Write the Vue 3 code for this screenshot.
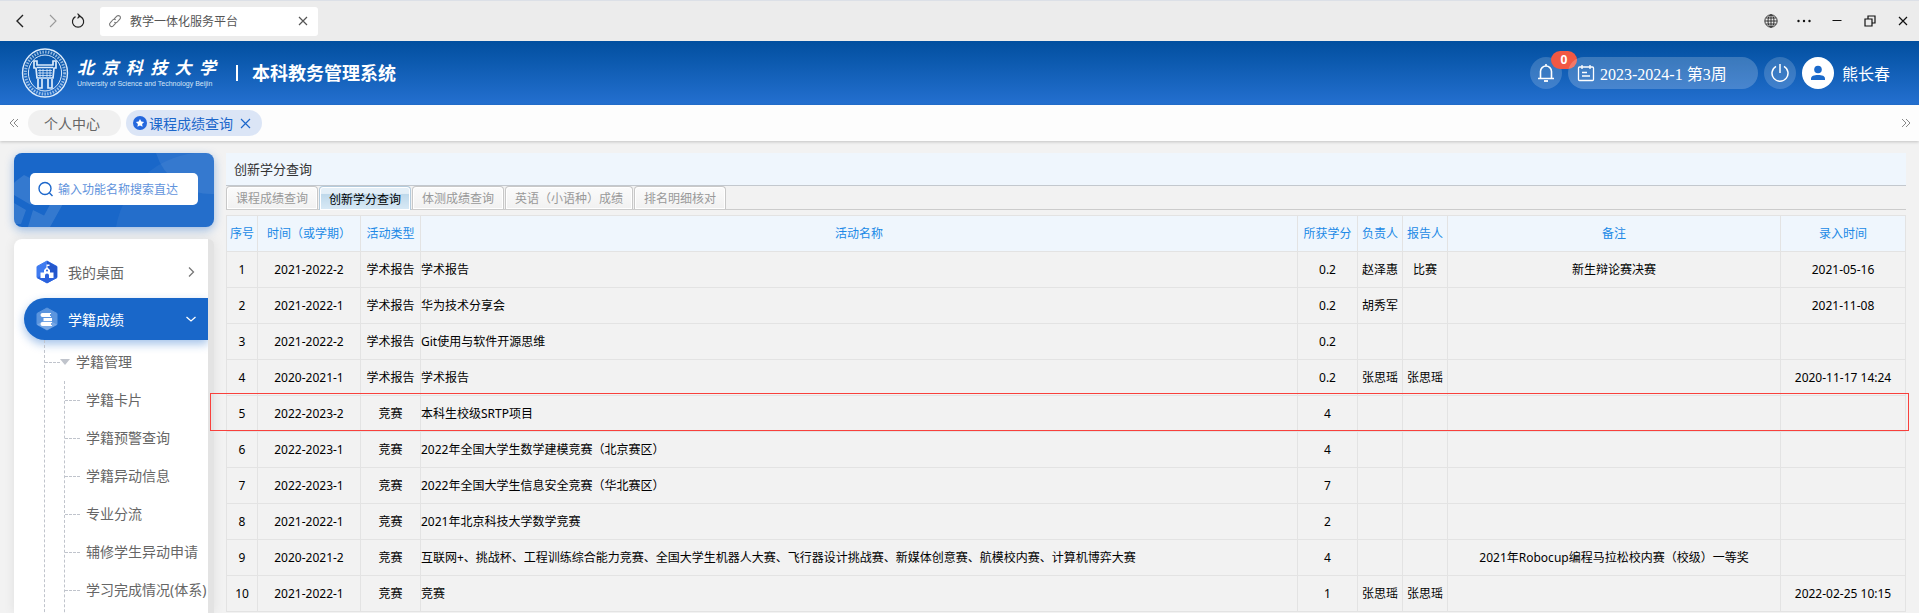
<script setup>
import { ref } from 'vue'

const keyword = ref('')
const activeTab = ref(1)
const logoChars = ['北', '京', '科', '技', '大', '学']
const tabs = ['课程成绩查询', '创新学分查询', '体测成绩查询', '英语（小语种）成绩', '排名明细核对']
const leaves = ['学籍卡片', '学籍预警查询', '学籍异动信息', '专业分流', '辅修学生异动申请', '学习完成情况(体系)']
const columns = ['序号', '时间（或学期）', '活动类型', '活动名称', '所获学分', '负责人', '报告人', '备注', '录入时间']
const rows = [
  [1, '2021-2022-2', '学术报告', '学术报告', '0.2', '赵泽惠', '比赛', '新生辩论赛决赛', '2021-05-16'],
  [2, '2021-2022-1', '学术报告', '华为技术分享会', '0.2', '胡秀军', '', '', '2021-11-08'],
  [3, '2021-2022-2', '学术报告', 'Git使用与软件开源思维', '0.2', '', '', '', ''],
  [4, '2020-2021-1', '学术报告', '学术报告', '0.2', '张思瑶', '张思瑶', '', '2020-11-17 14:24'],
  [5, '2022-2023-2', '竞赛', '本科生校级SRTP项目', '4', '', '', '', ''],
  [6, '2022-2023-1', '竞赛', '2022年全国大学生数学建模竞赛（北京赛区）', '4', '', '', '', ''],
  [7, '2022-2023-1', '竞赛', '2022年全国大学生信息安全竞赛（华北赛区）', '7', '', '', '', ''],
  [8, '2021-2022-1', '竞赛', '2021年北京科技大学数学竞赛', '2', '', '', '', ''],
  [9, '2020-2021-2', '竞赛', '互联网+、挑战杯、工程训练综合能力竞赛、全国大学生机器人大赛、飞行器设计挑战赛、新媒体创意赛、航模校内赛、计算机博弈大赛', '4', '', '', '2021年Robocup编程马拉松校内赛（校级）一等奖', ''],
  [10, '2021-2022-1', '竞赛', '竞赛', '1', '张思瑶', '张思瑶', '', '2022-02-25 10:15'],
]
</script>

<template>
  <div class="shell">
    <div class="chrome">
      <button class="nav back" aria-label="后退">
        <svg width="16" height="16" viewBox="0 0 16 16"><path d="M11 2 5 8l6 6" fill="none" stroke="#222" stroke-width="1.4" /></svg>
      </button>
      <button class="nav forward" aria-label="前进">
        <svg width="16" height="16" viewBox="0 0 16 16"><path d="m5 2 6 6-6 6" fill="none" stroke="#999" stroke-width="1.1" /></svg>
      </button>
      <button class="nav reload" aria-label="刷新">
        <svg width="16" height="16" viewBox="0 0 16 16"><path d="M5.500 3.600A5.600 5.600 0 1 0 10.600 3.600L8.200 3M7.500.6 10 3 7.500 5.400" fill="none" stroke="#222" stroke-width="1.2" /></svg>
      </button>
      <div class="page-tab">
        <svg width="14" height="14" viewBox="0 0 14 14" fill="none" stroke="#777" stroke-width="1.1"><path d="M6 5.2 8.8 2.2a2.1 2.1 0 0 1 3 3L9.300 8A2 2 0 0 1 6.300 8M8 8.800 5.200 11.800a2.100 2.100 0 0 1-3-3L4.700 6a2 2 0 0 1 3 0" /></svg>
        <span>教学一体化服务平台</span>
        <button aria-label="关闭页面">
          <svg width="10" height="10" viewBox="0 0 10 10"><path d="m1 1 8 8M9 1 1 9" stroke="#555" stroke-width="1.2" /></svg>
        </button>
      </div>
      <div class="window-tools">
        <button aria-label="语言">
          <svg width="14" height="14" viewBox="0 0 14 14" fill="none" stroke="#111" stroke-width=".8"><circle cx="7" cy="7" r="6.200" /><ellipse cx="7" cy="7" rx="3" ry="6.200" /><path d="M7 1v12M1 7h12M2 4h10M2 10h10" /></svg>
        </button>
        <button aria-label="更多">
          <svg width="14" height="14" viewBox="0 0 14 14" fill="#111"><circle cx="1.500" cy="7" r="1.200" /><circle cx="7" cy="7" r="1.200" /><circle cx="12.500" cy="7" r="1.200" /></svg>
        </button>
        <button aria-label="最小化">
          <svg width="12" height="14" viewBox="0 0 12 14"><path d="M1.500 6.500h9" stroke="#111" /></svg>
        </button>
        <button aria-label="还原">
          <svg width="12" height="12" viewBox="0 0 12 12" fill="none" stroke="#111" stroke-width="1.200"><path d="M1 4h7v7H1zM4 4V1h7v7H8" /></svg>
        </button>
        <button aria-label="关闭">
          <svg width="12" height="12" viewBox="0 0 12 12"><path d="m2 2 8 8M10 2l-8 8" stroke="#111" stroke-width="1.200" /></svg>
        </button>
      </div>
    </div>

    <header class="header">
      <svg class="emblem" width="48" height="50" viewBox="0 0 48 50" fill="none" stroke="#dcebfb">
        <ellipse cx="24" cy="25" rx="22.500" ry="24" stroke-width="1.400" />
        <ellipse cx="24" cy="25" rx="19.600" ry="21" stroke-width="3" stroke-dasharray="1.500 1.300" opacity=".65" />
        <ellipse cx="24" cy="25" rx="16.600" ry="18" stroke-width="1" />
        <path d="M13 13h3v4h16v-4h3v7h-2l-1 10H16l-1-10h-2z" stroke-width="1.700" />
        <path d="M17 31v9h4v-9M27 31v9h4v-9M16 19.500h16" stroke-width="1.700" />
        <path d="M17 22.500h14M17 25h14M17 27.500h14M19 21v8M22 21v8M26 21v8M29 21v8" stroke-width=".8" />
      </svg>
      <div class="school">
        <div class="school-cn"><span v-for="c in logoChars" :key="c">{{ c }}</span></div>
        <div class="school-en">University of Science and Technology Beijin</div>
      </div>
      <i class="divider"></i>
      <h1>本科教务管理系统</h1>
      <div class="user-tools">
        <button class="round bell" aria-label="消息">
          <svg width="18" height="20" viewBox="0 0 18 20" fill="none" stroke="#fff" stroke-width="1.600"><path d="M3.500 15V8.500a5.500 5.500 0 0 1 11 0V15M1 15.500h16M9 1v2" /><path d="M7 18h4" stroke-width="1.800" /></svg>
          <span class="badge">0</span>
        </button>
        <div class="week">
          <svg width="18" height="18" viewBox="0 0 18 18" fill="none" stroke="#fff" stroke-width="1.300"><rect x="1.500" y="3" width="15" height="13.500" rx="1" /><path d="M5 1v4M13 1v4M5 8.500h5M5 12h8" /></svg>
          <span>2023-2024-1 第3周</span>
        </div>
        <button class="round" aria-label="退出">
          <svg width="20" height="20" viewBox="0 0 20 20" fill="none" stroke="#fff" stroke-width="1.500"><path d="M6 3.300a8 8 0 1 0 8 0M10 1v9" /></svg>
        </button>
        <div class="avatar">
          <svg width="16" height="16" viewBox="0 0 16 16" fill="#1b6acb"><circle cx="8" cy="4.500" r="3.800" /><path d="M1 15v-1.500C1 11 4 10 8 10s7 1 7 3.500V15z" /></svg>
        </div>
        <span class="user-name">熊长春</span>
      </div>
    </header>

    <nav class="strip">
      <button class="chev" aria-label="向左">
        <svg width="10" height="10" viewBox="0 0 10 10"><path d="M5 1 1 5l4 4M9 1 5 5l4 4" fill="none" stroke="#888" /></svg>
      </button>
      <a class="pill" href="#">个人中心</a>
      <div class="pill current">
        <svg width="14" height="14" viewBox="0 0 14 14"><circle cx="7" cy="7" r="7" fill="#2467dd" /><path d="m7 3 1.300 2.600 2.800.4-2 2 .5 2.800L7 9.500l-2.600 1.300.5-2.800-2-2 2.800-.4z" fill="#fff" /></svg>
        <a href="#">课程成绩查询</a>
        <button aria-label="关闭标签">
          <svg width="11" height="11" viewBox="0 0 11 11"><path d="m1 1 9 9M10 1l-9 9" stroke="#1c67cb" stroke-width="1.200" /></svg>
        </button>
      </div>
      <button class="chev last" aria-label="向右">
        <svg width="10" height="10" viewBox="0 0 10 10"><path d="m1 1 4 4-4 4M5 1l4 4-4 4" fill="none" stroke="#888" /></svg>
      </button>
    </nav>

    <div class="body">
      <aside class="side">
        <div class="search-card">
          <svg class="deco" width="200" height="74" viewBox="0 0 200 74" fill="#fff">
            <path d="M142 0a58 58 0 0 0 58 41V0z" opacity=".08" /><path d="M102 74a90 90 0 0 1 98-74v74z" opacity=".05" />
            <path d="m2 28 8-6 16 8-9 22-17-10V30zM0 50l12 7-5 14H0zM19 57l14 7-5 10H14zM40 44l10 5-14 25H24z" opacity=".12" />
          </svg>
          <label class="search">
            <svg width="16" height="16" viewBox="0 0 16 16" fill="none" stroke="#1c67cb" stroke-width="1.400"><circle cx="7" cy="7.500" r="6" /><path d="m11.500 12 3 3" /></svg>
            <input v-model="keyword" type="text" aria-label="搜索功能" placeholder="输入功能名称搜索直达" />
          </label>
        </div>

        <div class="menu">
          <button class="menu-item">
            <svg width="22" height="24" viewBox="0 0 22 24"><path d="M11 1 21 6.500v11L11 23 1 17.500v-11z" fill="#3f7bf0" stroke="#3f7bf0" stroke-linejoin="round" /><path d="M11 1 21 6.500v11L11 23z" fill="#2457cc" /><path d="M11 12 1 18l10 5 10-5z" fill="#2c62dc" /><path d="M4.500 12.500H8V10l2.500-2.500V4.500h3V6h-2v1.500L14 10v2.500h3.500V18H13v-2.500a2 2 0 0 0-4 0V18H4.500z" fill="#fff" /><circle cx="11" cy="10.500" r="1" fill="#2c62dc" /></svg>
            <span>我的桌面</span>
            <svg class="arrow" width="12" height="12" viewBox="0 0 12 12"><path d="m4 1.500 4.500 4.500L4 10.500" fill="none" stroke="#777" stroke-width="1.300" /></svg>
          </button>
          <button class="menu-item open">
            <svg width="22" height="24" viewBox="0 0 22 24"><path d="M11 1 21 6.500v11L11 23 1 17.500v-11z" fill="#5b95de" stroke="#5b95de" stroke-linejoin="round" /><path d="M11 12 1 17.500 11 23l10-5.500z" fill="#76a7e5" /><path d="M6.500 6H15v1h-1v2h1v1H6.500a2 2 0 0 1 0-4zM7.500 11H16v3H7.500zM6.500 15H16v1h-1v2h1v1H6.500a2 2 0 0 1 0-4z" fill="#fff" /></svg>
            <span>学籍成绩</span>
            <svg class="arrow" width="12" height="12" viewBox="0 0 12 12"><path d="m1.500 4 4.500 4 4.500-4" fill="none" stroke="#fff" stroke-width="1.300" /></svg>
          </button>
          <div class="tree">
            <a class="branch" href="#"><i></i>学籍管理</a>
            <ul>
              <li v-for="leaf in leaves" :key="leaf"><a href="#">{{ leaf }}</a></li>
            </ul>
          </div>
        </div>
      </aside>

      <main class="content">
        <h2>创新学分查询</h2>
        <div class="tabs" role="tablist">
          <button v-for="(t, i) in tabs" :key="t" role="tab" :aria-selected="i === activeTab" :class="{ active: i === activeTab }" @click="activeTab = i">{{ t }}</button>
        </div>
        <table>
          <colgroup>
            <col class="c-no" /><col class="c-term" /><col class="c-type" /><col /><col class="c-type" />
            <col class="c-person" /><col class="c-person" /><col class="c-remark" /><col class="c-date" />
          </colgroup>
          <thead>
            <tr><th v-for="c in columns" :key="c" scope="col">{{ c }}</th></tr>
          </thead>
          <tbody>
            <tr v-for="row in rows" :key="row[0]" :class="{ marked: row[0] === 5 }">
              <td v-for="(cell, i) in row" :key="i" :class="{ left: i === 3 }">{{ cell }}</td>
            </tr>
          </tbody>
        </table>
      </main>
    </div>
  </div>
</template>

<style>
body {
  margin: 0;
}
</style>

<style scoped>
.shell {
  display: flex;
  flex-direction: column;
  height: 100vh;
  overflow: hidden;
  background: #f2f2f2;
  font-family: "Noto Sans", "Noto Sans CJK SC", sans-serif;
  font-size: 14px;
  color: #555;
}
.shell * {
  box-sizing: border-box;
}
button {
  display: flex;
  align-items: center;
  justify-content: center;
  margin: 0;
  padding: 0;
  border: 0;
  background: none;
  font: inherit;
  color: inherit;
}
a {
  color: inherit;
  text-decoration: none;
}
svg {
  display: block;
  flex: none;
}
.chrome {
  display: flex;
  align-items: center;
  flex: none;
  height: 41px;
  padding-left: 12px;
  border-top: 1px solid #dce0e7;
  background: #ececec;
}
.forward {
  margin-left: 17px;
}
.reload {
  margin-left: 9px;
}
.page-tab {
  display: flex;
  align-items: center;
  width: 218px;
  height: 29px;
  margin-left: 14px;
  padding: 0 10px 0 8px;
  border-radius: 3px;
  background: #fff;
  font-size: 12px;
}
.page-tab span {
  margin: 0 auto 0 8px;
}
.window-tools {
  display: flex;
  margin-left: auto;
}
.window-tools button {
  width: 33px;
  height: 38px;
}
.header {
  display: flex;
  align-items: center;
  flex: none;
  height: 64px;
  padding: 0 29px 0 21px;
  background: linear-gradient(#014f9f, #2470d0);
  color: #fff;
}
.school {
  width: 142px;
  margin-left: 8px;
  padding-bottom: 4px;
}
.school-cn {
  display: flex;
  justify-content: space-between;
  padding-right: 3px;
  font-family: "Noto Sans CJK SC", sans-serif;
  font-size: 17px;
  font-style: italic;
  font-weight: 700;
  line-height: 24px;
}
.school-en {
  font-family: "Liberation Sans", sans-serif;
  font-size: 7px;
  line-height: 9px;
  white-space: nowrap;
  color: #d3e4f7;
}
.divider {
  width: 2px;
  height: 16px;
  margin: 0 14px 0 17px;
  background: #fff;
}
h1 {
  margin: 0;
  font-size: 18px;
  font-weight: 700;
  line-height: 24px;
}
.user-tools {
  display: flex;
  align-items: center;
  gap: 6px;
  margin-left: auto;
}
.round {
  position: relative;
  width: 32px;
  height: 32px;
  border-radius: 16px;
  background: rgba(255, 255, 255, 0.17);
}
.badge {
  position: absolute;
  top: -6px;
  left: 21px;
  width: 26px;
  height: 18px;
  border-radius: 9px;
  background: #f15843;
  font-size: 12px;
  font-weight: 700;
  line-height: 18px;
}
.week {
  position: relative;
  display: flex;
  align-items: center;
  gap: 5px;
  width: 190px;
  height: 32px;
  padding: 0 0 0 9px;
  border-radius: 16px;
  background: rgba(255, 255, 255, 0.2);
  font-family: "Liberation Serif", "Noto Sans CJK SC", serif;
  font-size: 16px;
}
.avatar {
  display: flex;
  align-items: center;
  justify-content: center;
  width: 32px;
  height: 32px;
  border-radius: 16px;
  background: #fff;
}
.user-name {
  margin-left: 2px;
  font-size: 16px;
}
.strip {
  position: relative;
  display: flex;
  align-items: center;
  flex: none;
  height: 36px;
  padding: 0 8px 0 9px;
  background: #fdfdfd;
  box-shadow: 0 1px 3px rgba(0, 0, 0, 0.2);
}
.pill {
  display: flex;
  align-items: center;
  height: 26px;
  margin-left: 9px;
  padding: 0 21px 0 16px;
  border-radius: 13px;
  background: #f0f0f0;
  color: #666;
}
.pill.current {
  gap: 2px;
  margin-left: 5px;
  padding: 0 11px 0 7px;
  background: #dbe5f6;
  color: #1c67cb;
}
.pill.current button {
  margin-left: 5px;
}
.last {
  margin-left: auto;
}
.body {
  display: flex;
  align-items: stretch;
  flex: 1;
  gap: 12px;
  min-height: 0;
  padding: 12px 13px 0 14px;
}
.side {
  display: flex;
  flex-direction: column;
  flex: none;
  gap: 12px;
  width: 200px;
}
.search-card {
  position: relative;
  padding: 20px 16px 22px;
  border-radius: 8px;
  background: #1967c9;
  box-shadow: 0 3px 10px rgba(25, 103, 201, 0.4);
}
.deco {
  position: absolute;
  top: 0;
  left: 0;
  border-radius: 8px;
}
.search {
  position: relative;
  display: flex;
  align-items: center;
  gap: 4px;
  height: 32px;
  padding: 0 8px;
  border-radius: 5px;
  background: #fff;
}
.search input {
  flex: 1;
  min-width: 0;
  padding: 0;
  border: 0;
  outline: 0;
  background: none;
  font: inherit;
  font-size: 12px;
  color: #1c67cb;
}
.search input::placeholder {
  color: #5f93dc;
  opacity: 1;
}
.menu {
  flex: 1;
  min-height: 0;
  padding: 12px 0 0 10px;
  overflow: hidden;
  border-right: 6px solid #e3e3e3;
  border-radius: 8px 6px 0 0;
  background: #fff;
  box-shadow: 0 0 12px rgba(0, 0, 0, 0.08);
}
.menu-item {
  width: 100%;
  height: 42px;
  margin-bottom: 5px;
  padding: 0 11px 0 12px;
  color: #666;
}
.menu-item span {
  margin: 0 auto 0 10px;
}
.menu-item.open {
  margin-bottom: 0;
  border-radius: 21px 0 0 21px;
  background: #1967c9;
  box-shadow: 0 4px 10px rgba(25, 103, 201, 0.4);
  color: #fff;
}
.tree {
  margin-left: 20px;
  padding: 3px 0 0;
  border-left: 1px dashed #c0c4cc;
  line-height: 38px;
  color: #666;
  white-space: nowrap;
}
.branch {
  display: flex;
  align-items: center;
  height: 38px;
}
.branch::before {
  content: "";
  width: 15px;
  border-top: 1px dashed #c0c4cc;
}
.branch i {
  margin-right: 6px;
  border: 5px solid transparent;
  border-top: 6px solid #c0c4cc;
  border-bottom: 0;
}
.tree ul {
  margin: 0 0 0 19px;
  padding: 0 0 38px;
  border-left: 1px dashed #c0c4cc;
  list-style: none;
}
.tree li a {
  display: flex;
  align-items: center;
  gap: 6px;
}
.tree li a::before {
  content: "";
  width: 15px;
  border-top: 1px dashed #c0c4cc;
}
.content {
  flex: 1;
  min-width: 0;
}
h2 {
  height: 33px;
  margin: 0;
  padding-left: 8px;
  border-bottom: 1px solid #c3c8ce;
  background: #eff6fd;
  font-size: 13px;
  font-weight: 400;
  line-height: 32px;
  color: #333;
}
.tabs {
  display: flex;
  gap: 1px;
  height: 24px;
  margin-bottom: 5px;
  border-bottom: 1px solid #ccc;
}
.tabs button {
  height: 23px;
  padding: 0 9px;
  border: 1px solid #c8c8c8;
  border-bottom: 0;
  border-radius: 4px 4px 0 0;
  background: linear-gradient(#fbfbfb, #f1f1f1);
  box-shadow: inset 0 0 0 1px #fff;
  font-size: 12px;
  color: #999;
}
.tabs button.active {
  height: 24px;
  border-color: #b4cbdc;
  background: linear-gradient(#e4eff7 28%, #bfd9eb 32%, #d9eaf6);
  color: #000;
}
table {
  width: 100%;
  table-layout: fixed;
  border-collapse: collapse;
  font-size: 12px;
  color: #000;
}
.c-no {
  width: 31px;
}
.c-term {
  width: 103px;
}
.c-type {
  width: 60px;
}
.c-person {
  width: 45px;
}
.c-remark {
  width: 333px;
}
.c-date {
  width: 125px;
}
th,
td {
  height: 36px;
  padding: 0;
  border: 1px solid #e3e3e3;
  text-align: center;
  line-height: 18px;
  white-space: nowrap;
}
th {
  background: #eff6fd;
  font-weight: 400;
  color: #2089e6;
}
td.left {
  text-align: left;
}
.marked {
  position: relative;
}
/* Highlight frame drawn over the grid lines of the marked row */
.marked td:first-child::after {
  content: "";
  position: absolute;
  inset: -3px -3px 1px -17px;
  border: 1px solid #f8403c;
}
</style>
